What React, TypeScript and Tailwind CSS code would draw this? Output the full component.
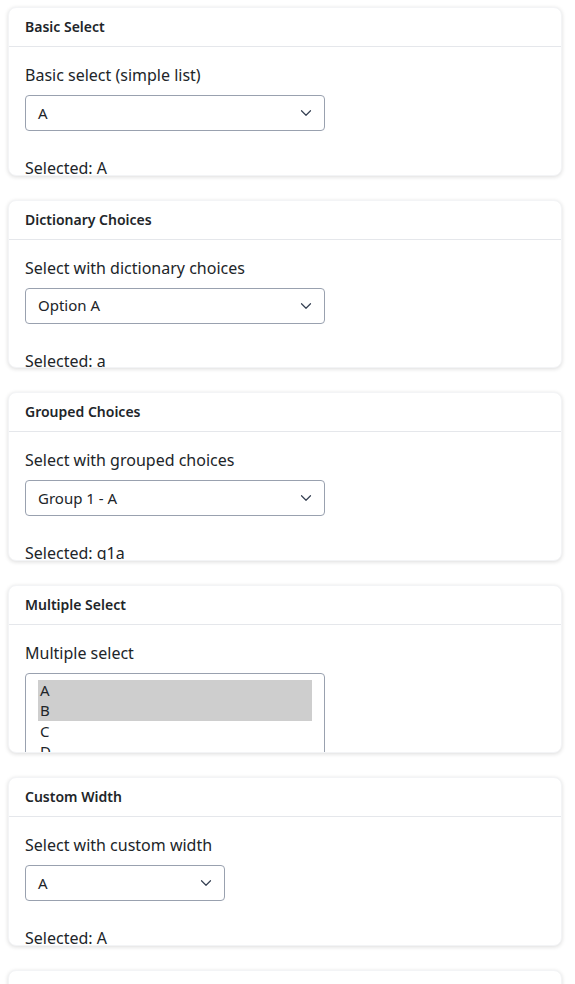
import { ChevronDown } from "lucide-react"

type Opt = { label: string }

function Card({ title, children }: { title: string; children: React.ReactNode }) {
  return (
    <div className="w-[554px] h-[168.5px] shrink-0 overflow-hidden rounded-lg border border-gray-100 bg-white shadow-[0_1px_4px_rgba(0,0,0,0.14)]">
      <div className="flex h-[39px] items-center border-b border-gray-200 px-4 text-sm font-semibold text-[#212529]">
        {title}
      </div>
      <div className="px-4 pt-4">{children}</div>
    </div>
  )
}

function Select({ value, width = "w-[300px]" }: { value: string; width?: string }) {
  return (
    <div
      className={`${width} flex h-9 items-center justify-between rounded border border-gray-400 pl-3 pr-[9px] text-[15px] text-[#212529]`}
    >
      <span>{value}</span>
      <ChevronDown size={18} strokeWidth={1.6} className="text-gray-700" />
    </div>
  )
}

function Field({ label, value, selected, width }: { label: string; value: string; selected: string; width?: string }) {
  return (
    <>
      <div className="mb-2 text-base leading-6 text-[#212529]">{label}</div>
      <Select value={value} width={width} />
      <div className="mt-[25px] text-base leading-6 text-[#212529]">Selected: {selected}</div>
    </>
  )
}

const multi: (Opt & { on: boolean })[] = [
  { label: "A", on: true },
  { label: "B", on: true },
  { label: "C", on: false },
  { label: "D", on: false },
]

export default function App() {
  return (
    <div className="flex min-h-screen flex-col gap-6 bg-white pl-2 pt-[7px] font-['Noto_Sans',sans-serif]">
      <Card title="Basic Select">
        <Field label="Basic select (simple list)" value="A" selected="A" />
      </Card>
      <Card title="Dictionary Choices">
        <Field label="Select with dictionary choices" value="Option A" selected="a" />
      </Card>
      <Card title="Grouped Choices">
        <Field label="Select with grouped choices" value="Group 1 - A" selected="g1a" />
      </Card>
      <Card title="Multiple Select">
        <div className="mb-2 text-base leading-6 text-[#212529]">Multiple select</div>
        <div className="w-[300px] h-[100px] rounded-sm border border-gray-400 px-3 pt-[6px]">
          {multi.map((o) => (
            <div
              key={o.label}
              className={`h-[20.5px] pl-[2px] text-[15px] leading-[20.5px] text-[#212529] ${o.on ? "bg-[#cecece]" : ""}`}
            >
              {o.label}
            </div>
          ))}
        </div>
      </Card>
      <Card title="Custom Width">
        <Field label="Select with custom width" value="A" selected="A" width="w-[200px]" />
      </Card>
      <Card title="Disabled Select">
        <Field label="Disabled select" value="A" selected="A" />
      </Card>
    </div>
  )
}
